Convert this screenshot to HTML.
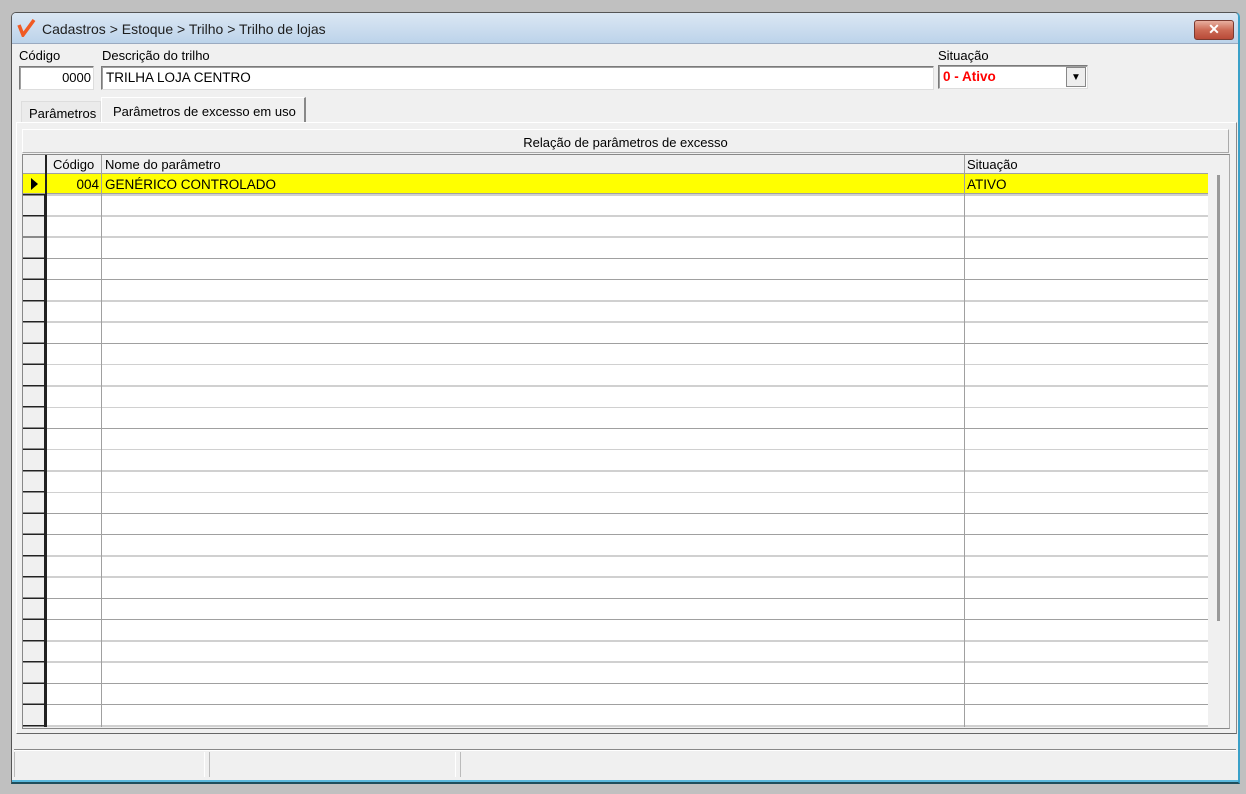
<!DOCTYPE html>
<html><head><meta charset="utf-8"><style>
*{margin:0;padding:0;box-sizing:border-box}
body{width:1246px;height:794px;background:#c0c0c0;position:relative;overflow:hidden;font-family:"Liberation Sans",Arial,sans-serif;font-size:13px;color:#000}
.a{position:absolute}
.win{left:11px;top:12px;width:1229px;height:772px;background:#f0f0f0;border:1px solid #555;border-radius:5px 5px 0 0;border-right:2px solid #3aa0c8;border-bottom:2px solid #1f4e5c}
.title{left:12px;top:13px;width:1226px;height:31px;background:linear-gradient(#dbe7f3,#bcd3ea);border-radius:4px 4px 0 0;border-bottom:1px solid #9aaac0}
.inp{background:#fff;border:1px solid #7a7a7a;border-right-color:#ddd;border-bottom-color:#ddd;box-shadow:inset 1px 1px 0 #a0a0a0}
.rows{background:#fff repeating-linear-gradient(to bottom,transparent 0,transparent 20.25px,#a0a0a0 20.25px,#a0a0a0 21.25px)}
.ind{background:#f0f0f0 repeating-linear-gradient(to bottom,transparent 0,transparent 19.75px,#222 19.75px,#222 21.25px)}
.vl{width:1px;background:#a0a0a0}
</style></head><body>
<div class="a win"></div>
<div class="a title"></div>
<svg class="a" style="left:17px;top:19px" width="20" height="18" viewBox="0 0 20 18"><path d="M2 6 L6 16 L17 1" stroke="#f05a23" stroke-width="3.5" fill="none"/></svg>
<div class="a" style="left:42px;top:21px;font-size:14px;color:#1e1e1e">Cadastros &gt; Estoque &gt; Trilho &gt; Trilho de lojas</div>
<div class="a" style="left:1194px;top:20px;width:40px;height:20px;border:1px solid #7a3a30;border-radius:3px;background:linear-gradient(#e8b0a0,#cc6a55 50%,#b84a38);color:#fff;font-weight:bold;font-size:14px;text-align:center;line-height:17px">✕</div>

<div class="a" style="left:19px;top:48px">Código</div>
<div class="a" style="left:102px;top:48px">Descrição do trilho</div>
<div class="a" style="left:938px;top:48px">Situação</div>
<div class="a inp" style="left:19px;top:66px;width:75px;height:24px;text-align:right;padding:3px 2px 0 0">0000</div>
<div class="a inp" style="left:101px;top:66px;width:833px;height:24px;padding:3px 4px 0;font-size:13.5px">TRILHA LOJA CENTRO</div>
<div class="a inp" style="left:938px;top:65px;width:150px;height:24px;padding:3px 4px 0;color:#f00;font-weight:bold;font-size:13.5px">0 - Ativo</div>
<div class="a" style="left:1066px;top:67px;width:20px;height:20px;background:#eee;border:1px solid #888;font-size:10px;text-align:center;line-height:19px">▼</div>

<div class="a" style="left:21px;top:101px;width:80px;height:22px;background:#ebebeb;border:1px solid #ddd;border-bottom:none;padding:4px 0 0 7px">Parâmetros</div>
<div class="a" style="left:101px;top:97px;width:205px;height:26px;background:#f0f0f0;border:1px solid #fff;border-right:2px solid #888;border-bottom:none;padding:6px 0 0 11px">Parâmetros de excesso em uso</div>
<div class="a" style="left:16px;top:122px;width:1221px;height:612px;border:1px solid #fff;border-right-color:#888;border-bottom-color:#666"></div>
<div class="a" style="left:22px;top:129px;width:1207px;height:24px;background:#f0f0f0;border:1px solid #fff;border-right-color:#aaa;border-bottom-color:#aaa;text-align:center;padding-top:5px">Relação de parâmetros de excesso</div>

<div class="a" style="left:22px;top:154px;width:1208px;height:575px;border:1px solid #888;border-right-color:#aaa;background:#f0f0f0"></div>
<div class="a" style="left:23px;top:155px;width:1185px;height:19px;background:#f0f0f0;border-bottom:1px solid #a0a0a0"></div>
<div class="a" style="left:53px;top:157px">Código</div>
<div class="a" style="left:105px;top:157px">Nome do parâmetro</div>
<div class="a" style="left:967px;top:157px">Situação</div>
<div class="a rows" style="left:46px;top:174px;width:1162px;height:553px"></div>
<div class="a ind" style="left:23px;top:174px;width:23px;height:553px;border-right:2px solid #222"></div>
<div class="a" style="left:23px;top:174px;width:1185px;height:20px;background:#ffff00;border-bottom:1px solid #a0a0a0"></div>
<div class="a" style="left:23px;top:194px;width:23px;height:1px;background:#222"></div>
<div class="a" style="left:45px;top:155px;width:2px;height:572px;background:#222"></div>
<div class="a vl" style="left:101px;top:155px;height:572px"></div>
<div class="a vl" style="left:964px;top:155px;height:572px"></div>
<svg class="a" style="left:31px;top:178px" width="8" height="12"><path d="M0 0 L7 6 L0 12Z" fill="#000"/></svg>
<div class="a" style="left:48px;top:177px;width:51px;text-align:right;font-size:13.5px">004</div>
<div class="a" style="left:105px;top:177px;font-size:13.5px">GENÉRICO CONTROLADO</div>
<div class="a" style="left:967px;top:177px;font-size:13.5px">ATIVO</div>
<div class="a" style="left:1217px;top:175px;width:3px;height:446px;background:#999"></div>

<div class="a" style="left:14px;top:749px;width:1222px;height:2px;border-top:1px solid #888;border-bottom:1px solid #fff"></div>
<div class="a" style="left:14px;top:752px;width:191px;height:25px;border-left:1px solid #bbb;border-right:1px solid #fff"></div>
<div class="a" style="left:209px;top:752px;width:247px;height:25px;border-left:1px solid #bbb;border-right:1px solid #fff"></div>
<div class="a" style="left:460px;top:752px;width:776px;height:25px;border-left:1px solid #bbb"></div>
<div class="a" style="left:12px;top:780px;width:1226px;height:2px;background:#5ab8dc"></div>
</body></html>
